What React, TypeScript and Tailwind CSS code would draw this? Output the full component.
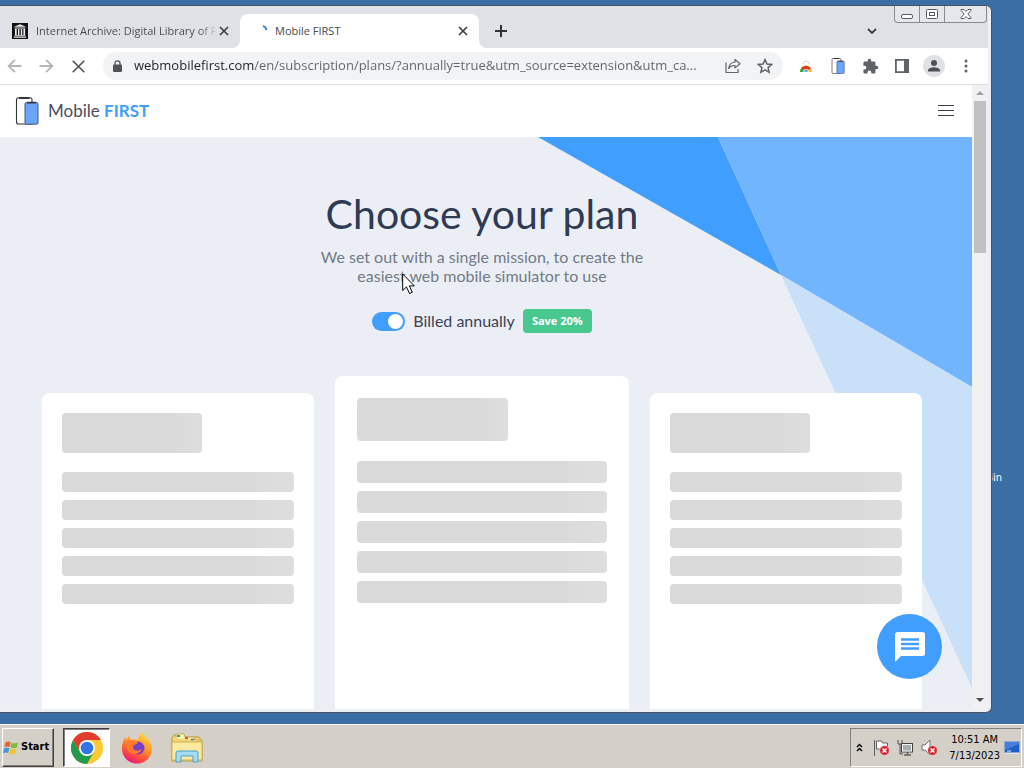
import { useState } from 'react';
import type { ReactNode } from 'react';

interface IconButtonProps {
  label: string;
  children: ReactNode;
  className?: string;
}

const systemFont = "font-['DejaVu_Sans_Condensed','DejaVu_Sans',sans-serif]";
const pageFont = 'font-[Lato,sans-serif]';

function IconButton({ label, children, className = '' }: IconButtonProps) {
  return (
    <button
      type="button"
      aria-label={label}
      className={`flex h-7 w-7 shrink-0 items-center justify-center text-[#5f6368] ${className}`}
    >
      {children}
    </button>
  );
}

function CloseIcon() {
  return (
    <svg width="10" height="10" viewBox="0 0 10 10" fill="none" stroke="#3c4043" strokeWidth="1.7">
      <path d="M1 1l8 8M9 1L1 9" />
    </svg>
  );
}

function PhonesIcon({ className }: { className: string }) {
  return (
    <svg className={className} viewBox="0 0 24 28">
      <defs>
        <linearGradient id="phone" x1="0" y1="0" x2="0" y2="1">
          <stop offset="0" stopColor="#69a3fb" />
          <stop offset="1" stopColor="#6ba6ff" />
        </linearGradient>
      </defs>
      <rect x="1.500" y="0.8" width="15.5" height="26.2" rx="2" fill="#fff" stroke="#33343d" strokeWidth="1.1" />
      <path d="M4 1h10.500" stroke="#33343d" strokeWidth="1.8" />
      <rect x="10" y="5.500" width="13" height="21.700" rx="1.500" fill="url(#phone)" stroke="#3d4869" strokeWidth="0.900" />
      <path d="M12 5.600h9" stroke="#33343d" strokeWidth="1.600" />
    </svg>
  );
}

function TabStrip() {
  return (
    <div className="flex h-[42px] shrink-0 items-end bg-[#dee1e6] font-['Open_Sans',sans-serif] text-[11px] text-[#45494d]">
      <div className="flex h-[34px] w-[240px] shrink-0 items-center pr-3 pl-3">
        <svg className="shrink-0" width="16" height="16" viewBox="0 0 16 16">
          <rect width="16" height="16" fill="#111" />
          <path
            d="M8 1.200L14 3.700H2zM2.500 4.400h11v1.200h-11zM2.500 12.300h11v1h-11zM1.800 13.800h12.400v1H1.800zM3 6h1.700v6H3zM6 6h1.400v6H6zM8.800 6h1.400v6H8.800zM11.400 6h1.700v6h-1.700z"
            fill="#eee"
          />
        </svg>
        <span className="ml-2 whitespace-nowrap bg-linear-to-r from-[#45494d] from-90% to-[#dee1e6] bg-clip-text text-transparent">
          Internet Archive: Digital Library of F
        </span>
        <button type="button" aria-label="Close Internet Archive tab" className="ml-auto flex h-4 w-4 items-center justify-center -mr-1">
          <CloseIcon />
        </button>
      </div>

      <div className="relative flex h-[34px] w-[239px] shrink-0 items-center rounded-t-lg bg-white pl-4">
        <svg className="absolute bottom-0 -left-2" width="8" height="8" viewBox="0 0 8 8">
          <path d="M8 0v8H0a8 8 0 0 0 8-8z" fill="#fff" />
        </svg>
        <svg className="absolute -right-2 bottom-0" width="8" height="8" viewBox="0 0 8 8">
          <path d="M0 0v8h8a8 8 0 0 1-8-8z" fill="#fff" />
        </svg>
        <svg width="16" height="16" viewBox="0 0 16 16" fill="none" stroke="#2f7fd0" strokeWidth="1.800">
          <path d="M7 3.200q3 .5 3.300 4" />
        </svg>
        <span className="ml-[3px] flex-1">Mobile FIRST</span>
        <button type="button" aria-label="Close Mobile FIRST tab" className="mr-2 flex h-4 w-4 items-center justify-center">
          <CloseIcon />
        </button>
      </div>

      <button type="button" aria-label="New tab" className="ml-3 flex h-[34px] w-5 items-center justify-center">
        <svg width="12" height="12" viewBox="0 0 12 12" stroke="#2f3337" strokeWidth="2">
          <path d="M6 0v12M0 6h12" />
        </svg>
      </button>
      <button type="button" aria-label="Search tabs" className="mr-3 ml-auto flex h-[34px] w-5 items-center justify-center">
        <svg width="10" height="7" viewBox="0 0 10 7" fill="none" stroke="#3c4043" strokeWidth="1.800">
          <path d="M1 1l4 4 4-4" />
        </svg>
      </button>

      {/* Window buttons */}
      <div className="mr-px flex h-[17px] self-start rounded-b border border-t-0 border-[#888c92] bg-[#e4e7eb]">
        <button type="button" aria-label="Minimize" className="flex w-[25px] items-center justify-center border-r border-[#888c92]">
          <svg width="12" height="12" viewBox="0 0 12 12" fill="#fff" stroke="#565a60">
            <rect x="0.500" y="6.500" width="11" height="4" rx="1.500" />
          </svg>
        </button>
        <button type="button" aria-label="Maximize" className="flex w-[25px] items-center justify-center border-r border-[#888c92]">
          <svg width="12" height="10" viewBox="0 0 12 10" fill="#fff" stroke="#565a60">
            <rect x="0.500" y="0.500" width="11" height="9" rx="1" />
            <rect x="3.500" y="3.500" width="5" height="3" />
          </svg>
        </button>
        <button type="button" aria-label="Close" className="flex w-[41px] items-center justify-center">
          <svg width="12" height="10" viewBox="0 0 12 10" fill="#fff" stroke="#565a60">
            <path d="M1 .5h3l2 2 2-2h3v1L7.800 5 11 8.500v1H8l-2-2-2 2H1v-1L4.200 5 1 1.500z" />
          </svg>
        </button>
      </div>
    </div>
  );
}

function Toolbar() {
  const [url, setUrl] = useState(
    'webmobilefirst.com/en/subscription/plans/?annually=true&utm_source=extension&utm_ca...'
  );

  return (
    <div className="flex h-[37px] shrink-0 items-center gap-1 border-b border-[#dcdee1] bg-white pr-2">
      <IconButton label="Back">
        <svg width="15" height="14" viewBox="0 0 15 14" fill="none" stroke="#b4b7ba" strokeWidth="1.800">
          <path d="M14.500 7H1.500M8 .8L1.600 7 8 13.200" />
        </svg>
      </IconButton>
      <IconButton label="Forward">
        <svg width="15" height="14" viewBox="0 0 15 14" fill="none" stroke="#b4b7ba" strokeWidth="1.800">
          <path d="M.5 7h13M7 .8L13.400 7 7 13.200" />
        </svg>
      </IconButton>
      <IconButton label="Stop loading">
        <svg width="13" height="13" viewBox="0 0 13 13" fill="none" stroke="#505458" strokeWidth="1.600">
          <path d="M.7.7l11.600 11.600M12.300.7L.7 12.300" />
        </svg>
      </IconButton>

      <div className="ml-[7px] flex h-7 min-w-0 flex-1 items-center gap-1 rounded-full bg-[#f1f3f4] pr-1">
        <svg className="mr-2 ml-2.5 shrink-0" width="9" height="12" viewBox="0 0 9 12">
          <rect y="4.500" width="9" height="7.500" rx="1" fill="#505458" />
          <path d="M2 5V3.300a2.500 2.500 0 0 1 5 0V5" fill="none" stroke="#505458" strokeWidth="1.300" />
        </svg>
        <input
          type="text"
          aria-label="Address"
          value={url}
          onChange={(e) => setUrl(e.target.value)}
          className="min-w-0 flex-1 bg-[linear-gradient(to_right,#202124_120px,#5f6368_120px)] bg-clip-text font-['Open_Sans',sans-serif] text-[13px] text-transparent caret-black outline-none"
        />
        <IconButton label="Share">
          <svg width="16" height="16" viewBox="0 0 16 16" fill="none" stroke="currentColor" strokeWidth="1.200" strokeLinejoin="round">
            <path d="M1 4.500v10h12V11" />
            <path d="M10 1.500l5 4.200-5 4.200V7.500c-3 0-5 1-6.300 3.200C4 7 6.500 4.400 10 4z" />
          </svg>
        </IconButton>
        <IconButton label="Bookmark this page">
          <svg width="16" height="16" viewBox="0 0 24 24" fill="none" stroke="currentColor" strokeWidth="2.200">
            <path d="M12 2.500l2.900 6.600 7.100.6-5.400 4.700 1.600 7-6.200-3.700-6.200 3.700 1.600-7L2 9.700l7.100-.6z" />
          </svg>
        </IconButton>
      </div>

      <IconButton label="Web Store extension" className="ml-[5px]">
        <svg width="14" height="14" viewBox="0 0 14 14">
          <path d="M4 5a3 3 0 0 1 6 0" fill="none" stroke="#d5d7da" />
          <path d="M1 13a6 6.500 0 0 1 12 0z" fill="#fbc116" />
          <path d="M1 13a6 6.500 0 0 1 2-4.500L6 13z" fill="#2da94f" />
          <path d="M1.800 9.500A6 5.500 0 0 1 12.200 9.500l-3 1.200H5z" fill="#dd3b2f" />
          <path d="M4.500 13a2.500 2.500 0 0 1 5 0z" fill="#3f79e0" stroke="#fff" strokeWidth="0.800" />
        </svg>
      </IconButton>
      <IconButton label="Mobile FIRST extension">
        <PhonesIcon className="h-4 w-3.5" />
      </IconButton>
      <IconButton label="Extensions">
        <svg width="17" height="17" viewBox="0 0 24 24" fill="currentColor">
          <path d="M20.500 11H19V7a2 2 0 0 0-2-2h-4V3.500a2.500 2.500 0 0 0-5 0V5H4a2 2 0 0 0-2 2v3.800h1.500a2.700 2.700 0 0 1 0 5.400H2V20a2 2 0 0 0 2 2h3.800v-1.500a2.700 2.700 0 0 1 5.400 0V22H17a2 2 0 0 0 2-2v-4h1.500a2.500 2.500 0 0 0 0-5z" />
        </svg>
      </IconButton>
      <IconButton label="Side panel">
        <svg width="14" height="14" viewBox="0 0 14 14" fill="currentColor">
          <path d="M0 0h14v14H0zM1.800 1.800v10.400H9V1.800z" fillRule="evenodd" />
        </svg>
      </IconButton>
      <IconButton label="Profile">
        <svg width="22" height="22" viewBox="0 0 22 22">
          <circle cx="11" cy="11" r="11" fill="#dfe1e5" />
          <circle cx="11" cy="8" r="3" fill="#4d5156" />
          <path d="M5 16.500v-1.300c0-2 4-3 6-3s6 1 6 3v1.300z" fill="#4d5156" />
        </svg>
      </IconButton>
      <IconButton label="Menu">
        <svg width="4" height="14" viewBox="0 0 4 14" fill="currentColor">
          <circle cx="2" cy="2" r="1.500" />
          <circle cx="2" cy="7" r="1.500" />
          <circle cx="2" cy="12" r="1.500" />
        </svg>
      </IconButton>
    </div>
  );
}

function PlanSkeleton({ featured = false }: { featured?: boolean }) {
  return (
    <div className={`h-[420px] rounded-lg bg-white ${featured ? 'p-[22px]' : 'mt-[17px] p-5'}`}>
      <div
        className={`rounded bg-linear-to-r from-[#dadada] from-80% to-[#dedede] ${
          featured ? 'h-[43px] w-[151px]' : 'h-10 w-[140px]'
        }`}
      />
      <div className={`flex flex-col gap-2 ${featured ? 'mt-5' : 'mt-[19px]'}`}>
        {[0, 1, 2, 3, 4].map((i) => (
          <div
            key={i}
            className={`rounded bg-linear-to-r from-[#dadada] from-80% to-[#dedede] ${featured ? 'h-[22px]' : 'h-5'}`}
          />
        ))}
      </div>
    </div>
  );
}

function PlansPage() {
  const [annually, setAnnually] = useState(true);

  return (
    <div className={`relative flex min-w-0 flex-1 flex-col overflow-hidden bg-[#ebeff5] ${pageFont}`}>
      <header className="flex h-[52px] shrink-0 items-center bg-white pr-[18px] pl-[15px]">
        <a href="#home" className="flex items-center gap-[9px] text-[17px] text-[#4a4d5c]">
          <PhonesIcon className="h-7 w-6" />
          <span>
            Mobile <span className="font-bold text-[#409eff]">FIRST</span>
          </span>
        </a>
        <button type="button" aria-label="Open navigation" className="ml-auto">
          <svg width="16" height="12" viewBox="0 0 16 12" stroke="#3b3d4a">
            <path d="M0 .5h16M0 5.500h16M0 10.500h16" />
          </svg>
        </button>
      </header>

      <main className="relative min-h-0 flex-1 overflow-hidden pr-2">
        <svg className="absolute top-0 right-0" width="434" height="551" viewBox="0 0 434 551">
          <path d="M0 0h180l63 138z" fill="#409eff" />
          <path d="M180 0h254v250L243 138z" fill="#71b5fe" />
          <path d="M243 138l191 112v301z" fill="#c8e0f8" />
        </svg>

        <div className="relative flex flex-col items-center pt-[51px] text-center">
          <h1 className="text-[41px] leading-[52px] text-[#2f3a54]">Choose your plan</h1>
          <p className="mt-[7px] max-w-[340px] text-base leading-[19px] text-[#727a86]">
            We set out with a single mission, to create the easiest web mobile simulator to use
          </p>
          <div className="mt-6 flex items-center gap-2">
            <label className="flex items-center gap-2 text-base leading-6 text-[#3a4256]">
              <input
                type="checkbox"
                checked={annually}
                onChange={() => setAnnually(!annually)}
                className="flex h-[19px] w-[33px] appearance-none items-center rounded-full bg-[#c0c4cc] px-0.5 before:h-[15px] before:w-[15px] before:rounded-full before:bg-white checked:justify-end checked:bg-[#409eff]"
              />
              Billed annually
            </label>
            <span className="rounded-sm bg-[#48c78e] px-[9px] font-['Open_Sans',sans-serif] text-[11px] leading-6 font-bold text-white">
              Save 20%
            </span>
          </div>
        </div>

        <div className="relative mt-[43px] grid grid-cols-[272fr_294fr_272fr] items-start gap-[21px] px-[42px]">
          <PlanSkeleton />
          <PlanSkeleton featured />
          <PlanSkeleton />
        </div>
      </main>

      {/* Chat launcher */}
      <button
        type="button"
        aria-label="Open chat"
        className="absolute right-[30px] bottom-[30px] flex h-[65px] w-[65px] items-center justify-center rounded-full bg-[#409eff]"
      >
        <svg width="30" height="30" viewBox="0 0 30 30">
          <path d="M2.500 0h25A2.500 2.500 0 0 1 30 2.500v19a2.500 2.500 0 0 1-2.500 2.500H6l-6 6V2.500A2.500 2.500 0 0 1 2.500 0z" fill="#fff" />
          <path d="M6 7.500h18M6 12h18M6 16.500h18" stroke="#409eff" strokeWidth="2.400" />
        </svg>
      </button>
    </div>
  );
}

function ScrollBar() {
  return (
    <div className="flex w-4 shrink-0 flex-col items-center bg-[#f1f1f1]">
      <svg className="my-1.5 shrink-0" width="8" height="4" viewBox="0 0 8 4">
        <path d="M4 0l4 4H0z" fill="#a0a0a0" />
      </svg>
      <div className="h-[152px] w-3 bg-[#c1c1c1]" />
      <svg className="mt-auto mb-[7px] shrink-0" width="8" height="4" viewBox="0 0 8 4">
        <path d="M4 4l4-4H0z" fill="#505050" />
      </svg>
    </div>
  );
}

function BrowserWindow() {
  return (
    <div className="relative flex min-h-0 flex-1 flex-col overflow-hidden rounded-r-md border border-l-0 border-[#4a5260] bg-[#eceff4] pr-[3px] pb-[3px]">
      <TabStrip />
      <Toolbar />
      <div className="flex min-h-0 flex-1">
        <PlansPage />
        <ScrollBar />
      </div>
    </div>
  );
}

function ErrorBadge() {
  return (
    <g>
      <circle cx="11.500" cy="11.500" r="4.800" fill="#d8232f" stroke="#f4d5d5" strokeWidth="0.600" />
      <path d="M9.500 9.500l4 4M13.500 9.500l-4 4" stroke="#fff" strokeWidth="1.500" />
    </g>
  );
}

function Taskbar() {
  return (
    <footer className={`flex h-11 shrink-0 items-stretch border-t border-white bg-[#d4d0c8] px-0.5 pt-[3px] pb-px text-[11px] text-black ${systemFont}`}>
      <button
        type="button"
        className="flex w-[52px] items-center gap-0.5 border border-t-white border-r-[#404040] border-b-[#404040] border-l-white font-bold shadow-[inset_-1px_-1px_#808080]"
      >
        <svg className="shrink-0" width="16" height="16" viewBox="0 0 16 16">
          <path d="M2.500 2.500Q5 .8 7.700 2.200L6.600 7Q4 5.800 1.300 7.300z" fill="#e8622c" />
          <path d="M8.600 2.700Q11.500 4 15 2.500L13.800 7.600Q10.500 9 7.500 7.500z" fill="#7fba3c" />
          <path d="M1 8.400Q3.800 7 6.400 8.200L5.200 13Q2.500 11.800 0 13.200z" fill="#4196dc" />
          <path d="M7.300 8.700Q10.300 10 13.500 8.700L12.300 13.500Q9 15 6.100 13.400z" fill="#f6c52c" />
        </svg>
        Start
      </button>

      <button
        type="button"
        aria-label="Google Chrome"
        className="ml-[9px] flex w-[47px] items-center justify-center border border-t-[#404040] border-r-white border-b-white border-l-[#404040] bg-[#fdfdfd] shadow-[inset_1px_1px_#808080]"
      >
        <svg width="32" height="32" viewBox="0 0 32 32">
          <circle cx="16" cy="16" r="16" fill="#fbc934" />
          <path d="M16 8h13.860A16 16 0 0 0 2.140 8L9.070 20z" fill="#e33b2e" />
          <path d="M2.140 8A16 16 0 0 0 16 32L22.930 20 16 24 9.070 20z" fill="#249a4c" />
          <circle cx="16" cy="16" r="8" fill="#fff" />
          <circle cx="16" cy="16" r="6.300" fill="#2f76e8" />
        </svg>
      </button>
      <button type="button" aria-label="Firefox" className="ml-[11px] flex w-8 items-center justify-center">
        <svg width="32" height="32" viewBox="0 0 32 32">
          <defs>
            <linearGradient id="fox" x1="0.800" y1="0" x2="0.300" y2="1">
              <stop offset="0" stopColor="#ffe14a" />
              <stop offset="0.450" stopColor="#ff9326" />
              <stop offset="0.800" stopColor="#fb3f45" />
              <stop offset="1" stopColor="#e31587" />
            </linearGradient>
          </defs>
          <path
            d="M21 0c1 3 5 5 7.500 9 3.500 6 3 13-1.500 18-6 6-16 6-22 0C.5 22 0 15 2 10l2-5 1 3 3-4 2 4c3-1 6-1 7 0 0-3 2-6 4-8z"
            fill="url(#fox)"
          />
          <circle cx="17" cy="16" r="6.500" fill="#7a3fc8" />
          <path d="M7 9c4-2 8 0 10 2-1 2-5 1-5 4 0 4 5 5 9 2-2 6-12 7-15 0-1-3 0-6 1-8z" fill="#ff7a2e" />
        </svg>
      </button>
      <button type="button" aria-label="Windows Explorer" className="ml-[18px] flex w-8 items-center justify-center">
        <svg width="32" height="30" viewBox="0 0 32 30">
          <path d="M1 5l2-3h8l2 2h15l3 4v20H1z" fill="#f2d777" stroke="#b79b45" />
          <path d="M5 5V1h8l1 3h9l1 3h6" fill="#fff5c4" stroke="#c6aa51" />
          <path d="M6 3h3" stroke="#3c9c5c" strokeWidth="2" />
          <path d="M14 5h3" stroke="#d8502f" strokeWidth="2" />
          <path d="M20 6.500h3" stroke="#3d79c5" strokeWidth="1.500" />
          <path d="M1 9h30v18H1z" fill="#fbeaa0" stroke="#ccb159" />
          <path d="M5 29V20q0-2 2-2h18q2 0 2 2v9h-5v-6H10v6z" fill="#a6dcf3" stroke="#4a9fc8" />
        </svg>
      </button>

      {/* Notification area */}
      <div className="ml-auto flex items-center border border-t-[#808080] border-r-white border-b-white border-l-[#808080] pr-px pl-1">
        <button type="button" aria-label="Show hidden icons" className="flex w-2 justify-center">
          <svg width="7" height="9" viewBox="0 0 7 9" fill="none" stroke="#000" strokeWidth="1.400">
            <path d="M1 4l2.500-2.500L6 4M1 8l2.500-2.500L6 8" />
          </svg>
        </button>
        <div className="ml-2.5 flex gap-2">
          <svg width="16" height="18" viewBox="0 0 16 18">
            <path d="M1.500 1v16M3.500 2h5l1 2h5v8H9L8 10H3.500z" fill="#fff" stroke="#606060" />
            <ErrorBadge />
          </svg>
          <svg width="16" height="18" viewBox="0 0 16 18">
            <rect x="4.500" y="4.500" width="11" height="8.500" fill="#a9aeb0" stroke="#404040" />
            <rect x="5.500" y="5.500" width="9" height="6.500" fill="none" stroke="#f3f3f3" />
            <path d="M7 16h7M10.500 13v3" stroke="#606060" strokeWidth="1.500" />
            <path d="M1 1v4h4V1M3 5v10h3" fill="none" stroke="#505050" />
          </svg>
          <svg width="16" height="18" viewBox="0 0 16 18">
            <path d="M1 6h3l5-5v15l-5-5H1z" fill="#fff" stroke="#707070" />
            <ErrorBadge />
          </svg>
        </div>
        <time dateTime="2023-07-13T10:51" className="ml-3 text-center leading-4">
          10:51 AM
          <br />
          7/13/2023
        </time>
        <button type="button" aria-label="Show desktop" className="ml-1">
          <svg width="16" height="14" viewBox="0 0 16 14">
            <rect x="0.500" y="0.500" width="15" height="11" fill="#1f5fc4" stroke="#8ba9ce" />
            <path d="M1 9L15 3V1H1z" fill="#477fd8" />
            <path d="M1 12.500h14" stroke="#dfe5ee" />
            <path d="M3 10h4" stroke="#e5eefb" />
          </svg>
        </button>
      </div>
    </footer>
  );
}

export default function App() {
  return (
    <div className="flex h-screen flex-col overflow-hidden bg-[#3a6ea5]">
      <div className="relative flex min-h-0 flex-1 flex-col pt-[5px] pr-8 pb-[11px]">
        <span className={`absolute top-[471px] right-[22px] text-[11px] leading-[14px] text-white ${systemFont}`}>Bin</span>
        <BrowserWindow />
        <svg className="absolute top-[273px] left-[402px]" width="13" height="22" viewBox="0 0 13 22">
          <path d="M.7 1v16.500l3.800-3.600 3 6.600 2.800-1.300-3-6.300h5z" fill="#fff" stroke="#000" />
        </svg>
      </div>
      <Taskbar />
    </div>
  );
}
